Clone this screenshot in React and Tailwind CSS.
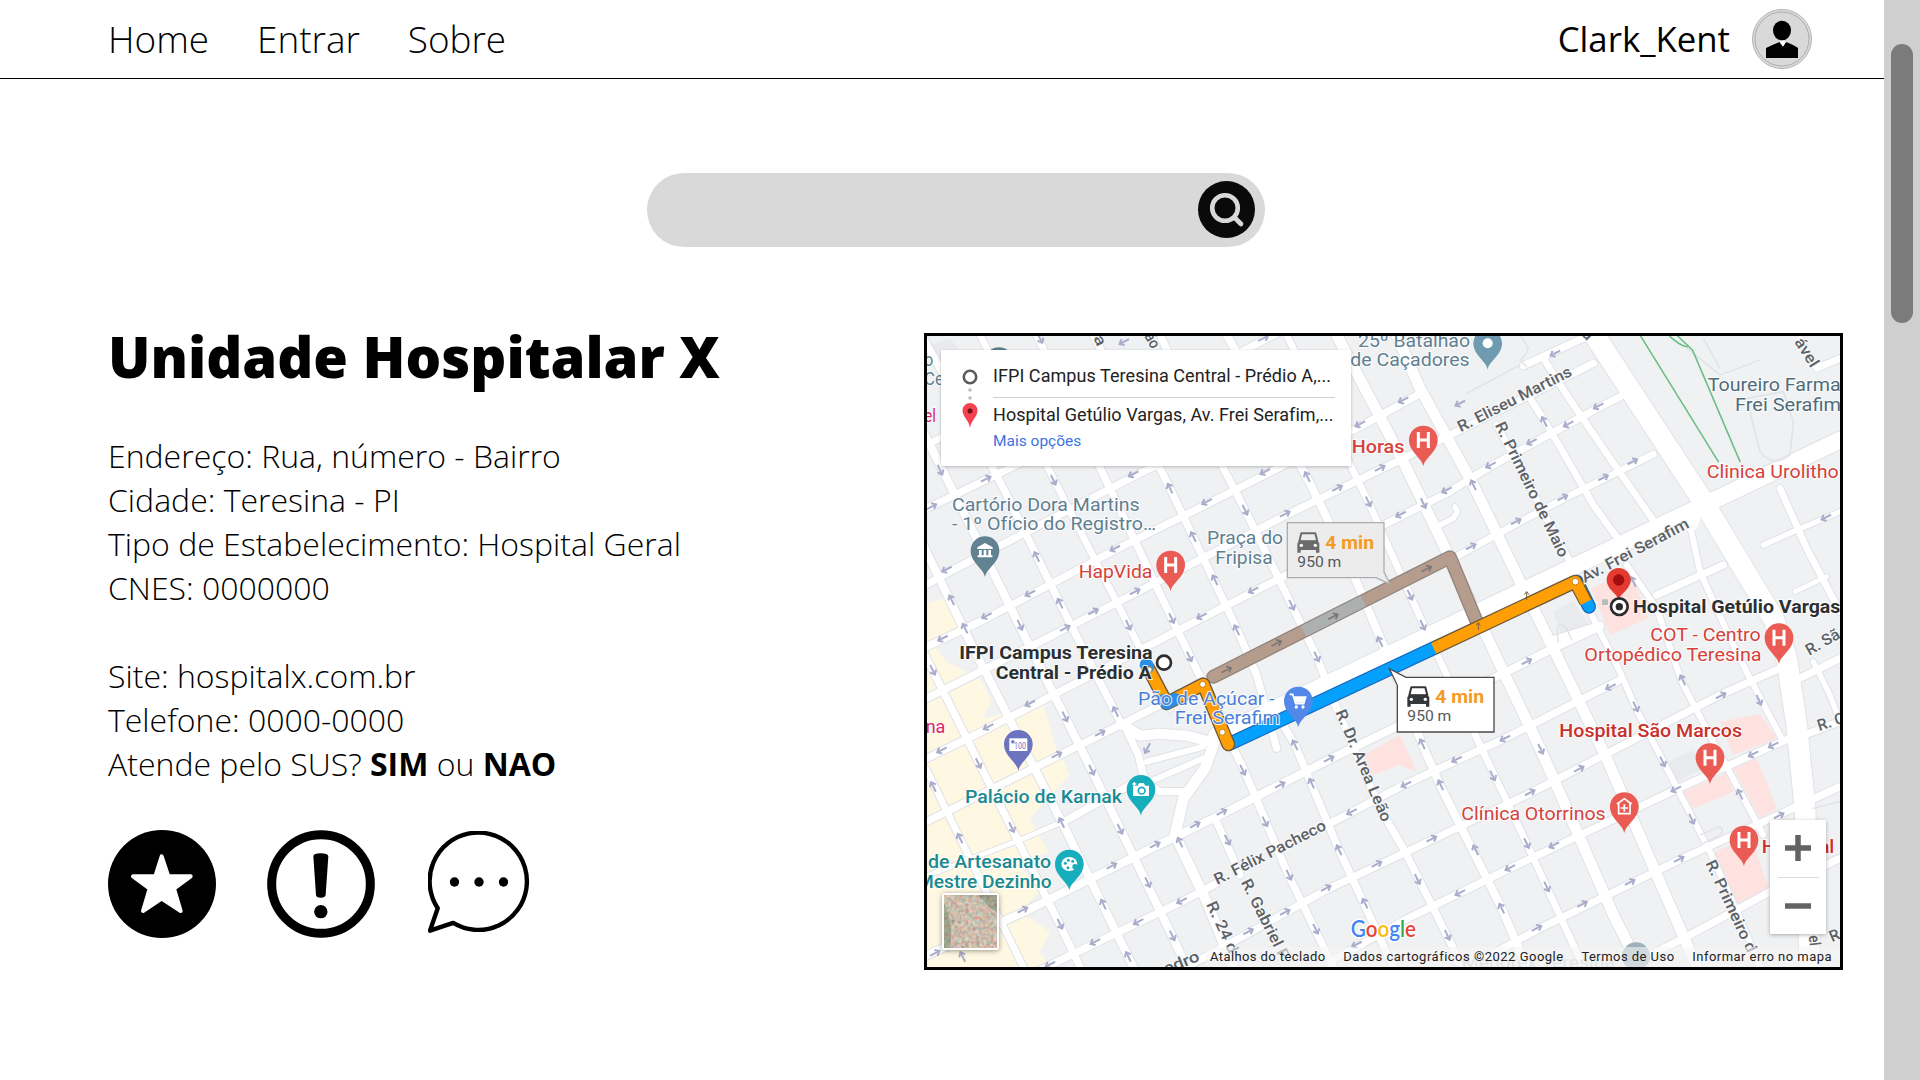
import React from "react";

/* Map drawing units: three per screen pixel. Each street is [width, points]. */
const streets = [
  [20, "0,370 60,340"],
  [22, "0,560 600,270 1080,20"],
  [22, "0,790 80,745 640,455 1290,130"],
  [22, "0,975 200,880 585,675 860,538 1320,305 1510,200"],
  [22, "0,1130 330,965 645,805 1095,572 1440,405 1580,335 2020,115"],
  [22, "0,1310 205,1210 845,880 1440,575 1580,505 1710,425 1835,357 2035,248 2100,215"],
  [22, "0,1500 410,1295 720,1140 900,1045"],
  [20, "1590,705 1788,597 1928,523 2050,463 2200,388"],
  [14, "0,1660 300,1545 440,1485"],
  [22, "440,1485 640,1375"],
  [24, "0,1900 310,1762 705,1565 905,1468 1225,1305 1440,1200 1770,1035 1910,965 2040,905"],
  [22, "330,1950 525,1855 785,1730 890,1675"],
  [22, "1180,1520 1295,1462 1455,1378 1755,1240 2100,1065"],
  [22, "800,1926 985,1825 1218,1695 1535,1545 1830,1405 2400,1110 2580,1030"],
  [22, "1230,1910 1460,1782 1770,1630 2265,1395 2500,1288 2620,1235"],
  [22, "1640,1930 1850,1815 2277,1605 2575,1470 2760,1385"],
  [22, "2150,1910 2300,1835 2550,1700 2760,1600"],
  [20, "20,1335 120,1540 310,1926"],
  [22, "0,960 175,1310 420,1800 480,1926"],
  [24, "0,640 135,920 425,1490 640,1926"],
  [24, "0,300 100,500 300,905 515,1335 755,1830 800,1926"],
  [22, "0,20 130,260 245,480 420,835 600,1190"],
  [20, "180,30 400,460 625,900 700,1050 750,1150"],
  [22, "350,30 560,470 755,880 850,1075"],
  [22, "940,1270 970,1330 1105,1650 1240,1926"],
  [22, "520,30 750,490 950,910 1010,1050 1070,1270"],
  [22, "1090,1200 1125,1260 1255,1570 1420,1926"],
  [22, "720,30 895,400 975,555 1115,840 1190,995 1250,1150 1380,1450 1455,1580 1600,1870 1620,1926"],
  [22, "885,1480 930,1580 960,1650"],
  [24, "920,30 1160,455 1280,700 1440,1080 1505,1255 1560,1380 1745,1750 1820,1926"],
  [20, "1100,30 1345,530 1470,810 1580,1050 1680,1260 1820,1555 1990,1926"],
  [32, "1250,30 1440,390 1600,720 1750,1040 1860,1270 1980,1540 2080,1770 2160,1926"],
  [32, "1430,30 1500,190 1660,480 1800,770 1900,970 2060,1300 2180,1580 2280,1810 2330,1926"],
  [20, "1820,205 1875,290 1940,400 2020,540 2100,650"],
  [20, "1730,300 1950,710"],
  [20, "1870,100 1940,210 2070,400 2210,600"],
  [62, "2010,10 2350,530 2560,880 2600,1000 2630,1200 2655,1450 2670,1926"],
  [18, "2000,840 2100,1040 2145,1145 2230,1310 2370,1580 2460,1780 2520,1926"],
  [18, "2120,720 2210,850 2285,1070 2340,1175 2460,1400 2530,1530"],
  [18, "2310,600 2340,740 2430,940 2490,1060 2590,1250"],
  [20, "2580,490 2660,670 2760,860"],
  [16, "2530,660 2620,620 2760,560"],
  [14, "2625,800 2720,755"],
  [22, "2210,810 2410,720"],
  [20, "1880,950 2040,900"],
  [16, "2680,1010 2730,1110 2760,1190"],
  [22, "2640,1060 2760,1000"],
  [22, "2640,1235 2760,1190"],
  [22, "1810,122 2010,30"],
  [16, "1560,600 1600,580 1612,560 1605,545"],
  [20, "2690,130 2760,100"],
  [16, "2690,130 2640,40"],
  [50, "890,1232 1050,1158 1540,925 1960,725 2310,560 2760,345"],
  [30, "610,1200 660,1232 720,1226 800,1232 870,1250"],
  [22, "615,1205 655,1290 675,1370 720,1400 790,1400"],
  [18, "680,1310 850,1265"],
  [18, "690,1370 850,1300"],
  [32, "880,1260 855,1330 790,1420 765,1530"],
  [30, "765,1530 860,1730 940,1926"],
];

const R = -27, L = 153, D = 64, U = 244;
/* One-way markers: x, y, heading in degrees. */
const arrows = [
  [60, 435, D], [198, 462, R], [35, 545, R], [400, 465, D], [640, 447, L], [750, 490, U], [975, 555, D],
  [860, 530, L], [1035, 440, L], [1162, 455, U], [1320, 297, L], [1380, 430, R], [1252, 490, R], [1095, 567, R],
  [1345, 530, D], [820, 635, U], [585, 670, L], [350, 695, U], [80, 733, L], [885, 765, U], [645, 800, R],
  [330, 805, L], [95, 825, U], [420, 835, U], [520, 860, R], [200, 872, L], [300, 900, D], [625, 900, D],
  [435, 910, R], [135, 910, U], [68, 940, L], [755, 880, D], [845, 873, L], [1000, 795, L], [1115, 840, D],
  [950, 915, U], [1380, 950, U], [360, 40, D], [612, 50, L], [1030, 40, R],
  [1450, 225, L], [1905, 85, L], [1620, 235, L], [2035, 243, L], [1945, 297, L], [1873, 290, U], [1835, 350, L],
  [1712, 420, L], [1580, 495, L], [1660, 480, U], [1510, 535, D], [1442, 568, L], [1788, 590, R], [1928, 518, R],
  [2050, 458, R], [2138, 410, R], [1653, 665, R], [1470, 810, D], [1508, 900, D], [2718, 577, L],
  [2140, 770, U], [38, 1035, D], [808, 995, D], [1190, 995, D], [330, 1135, L], [435, 1175, D],
  [587, 1160, U], [205, 1205, L], [540, 1225, R], [65, 1275, L], [410, 1290, R], [175, 1315, D], [515, 1335, D],
  [682, 1270, 118], [968, 1335, D], [1125, 1260, U], [1227, 1302, R], [1175, 1375, U], [1080, 1380, R], [40, 1385, U],
  [425, 1493, U], [275, 1507, D], [600, 1512, D], [825, 1500, R], [905, 1462, R], [1035, 1490, D], [1295, 1460, L],
  [120, 1540, U], [705, 1560, R], [780, 1552, U], [922, 1545, D], [1257, 1575, U], [575, 1623, R], [683, 1672, D],
  [1107, 1650, D], [1370, 1618, R], [1218, 1690, R], [785, 1727, L], [550, 1738, U], [308, 1755, R], [655, 1790, L],
  [420, 1797, D], [757, 1832, D], [985, 1820, R], [1095, 1762, R], [1187, 1812, D], [1335, 1735, U], [525, 1850, L],
  [625, 1895, U], [45, 1885, R], [128, 1895, U], [390, 1918, L], [1820, 1010, R], [2072, 1085, L], [2288, 1065, U],
  [2147, 1145, D], [2403, 1112, R], [2517, 1125, D], [1507, 1257, U], [1755, 1240, L], [1862, 1272, D],
  [1610, 1303, L], [1718, 1352, D], [1977, 1332, R], [2228, 1310, D], [2560, 1260, L], [2500, 1287, L], [1458, 1378, L],
  [1562, 1380, U], [1830, 1403, R], [2268, 1392, L], [2460, 1408, U], [2315, 1482, D], [2577, 1472, R],
  [1535, 1542, R], [1667, 1575, U], [1820, 1555, D], [1902, 1560, L], [1770, 1628, L], [2277, 1603, R],
  [1492, 1663, D], [1880, 1685, D], [2130, 1672, R], [1620, 1703, L], [1745, 1750, U], [1987, 1738, R],
  [1582, 1830, D], [1850, 1810, R], [1310, 1858, L],
];

const GREY = "#5f7f90", RED = "#d4423b", DARK = "#2c3033", TEAL = "#1b8a91", ROAD = "#5c6166";
/* Labels: text, x, baseline, drawn length, colour, weight. */
const labels = [
  ["25º Batalhão", 1315, 66, 336, GREY, 400],
  ["de Caçadores", 1292, 124, 358, GREY, 400],
  ["o", 14, 122, 27, GREY, 400],
  ["Ce", 14, 180, 58, GREY, 400],
  ["el", 14, 292, 35, "#d8246f", 400],
  ["na", 18, 1224, 59, "#d8246f", 400],
  ["Horas", 1296, 384, 158, RED, 500],
  ["Cartório Dora Martins", 97, 557, 563, GREY, 400],
  ["- 1º Ofício do Registro…", 97, 616, 612, GREY, 400],
  ["HapVida", 477, 760, 221, RED, 400],
  ["Praça do", 862, 658, 228, GREY, 400],
  ["Fripisa", 887, 717, 172, GREY, 400],
  ["Toureiro Farma", 2364, 199, 399, "#4f6c7a", 400],
  ["Frei Serafim", 2446, 258, 318, "#4f6c7a", 400],
  ["Clinica Urolitho", 2361, 460, 396, RED, 400],
  ["Hospital Getúlio Vargas", 2140, 864, 622, DARK, 700],
  ["COT - Centro", 2192, 949, 331, RED, 400],
  ["Ortopédico Teresina", 1994, 1008, 532, RED, 400],
  ["IFPI Campus Teresina", 119, 1003, 580, DARK, 700],
  ["Central - Prédio A", 228, 1063, 468, DARK, 700],
  ["Pão de Açúcar -", 655, 1139, 410, "#4a80d8", 400],
  ["Frei Serafim", 765, 1198, 316, "#4a80d8", 400],
  ["Palácio de Karnak", 136, 1434, 471, TEAL, 500],
  ["de Artesanato", 25, 1629, 369, TEAL, 500],
  ["Mestre Dezinho", -8, 1688, 404, TEAL, 500],
  ["Hospital São Marcos", 1919, 1236, 548, "#c9302b", 500],
  ["Clínica Otorrinos", 1625, 1484, 433, RED, 400],
  ["Hospital", 2526, 1585, 218, "#c9302b", 500],
];

/* Street names: text, x, y, length, angle. */
const roadNames = [
  ["R. Eliseu Martins", 1622, 322, 378, -27],
  ["R. Primeiro de Maio", 1724, 300, 445, 64],
  ["Av. Frei Serafim", 1994, 774, 358, -28],
  ["R. Dr. Area Leão", 1246, 1162, 360, 67],
  ["R. Félix Pacheco", 892, 1680, 370, -27],
  ["R. Gabriel F", 962, 1672, 262, 63],
  ["R. 24 d", 858, 1738, 165, 65],
  ["R. Primeiro d", 2356, 1614, 300, 65],
  ["edro", 738, 1948, 112, -22],
  ["R. Sã", 2668, 992, 110, -30],
  ["R. C", 2698, 1218, 84, -18],
  ["R", 2736, 1852, 30, -24],
  ["el", 2666, 1832, 32, 84],
  ["ável", 2622, 50, 95, 58],
  ["ira", 506, 8, 64, 66],
  ["ão", 672, 32, 48, 62],
  ["a", 1984, 30, 26, 45],
];

function Pin({ x, y, color, children }) {
  return (
    <g transform={`translate(${x} ${y})`}>
      <path d="M0 79 C-5 52 -43 36 -43 0 A43 43 0 1 1 43 0 C43 36 5 52 0 79Z" fill={color} />
      {children}
    </g>
  );
}

function HospitalPin({ x, y }) {
  return (
    <Pin x={x} y={y} color="#ea5b54">
      <path d="M-15 -24V24M15 -24V24M-15 0H15" stroke="#fff" strokeWidth="9" fill="none" />
    </Pin>
  );
}

function Callout({ x, y, muted }) {
  const ink = muted ? "#6b6b6b" : "#34363a";
  return (
    <g transform={`translate(${x} ${y})`}>
      {muted ? (
        <path d="M0 0H290V148L308 184L266 165H0Z" fill="#ececec" stroke="#adadad" strokeWidth="4" />
      ) : (
        <path d="M26 -14H290V150H0V10L-24 -40L26 -14Z" transform="translate(0 16)" fill="#fff" stroke="#4b4b4b" strokeWidth="4" />
      )}
      <g transform="translate(30 30)">
        <path d="M12 2H54L60 26H6Z" fill="none" stroke={ink} strokeWidth="6" strokeLinejoin="round" />
        <path d="M6 24H60L66 32V60H56V52H10V60H0V32Z" fill={ink} />
        <circle cx="12" cy="38" r="5" fill="#fff" />
        <circle cx="54" cy="38" r="5" fill="#fff" />
      </g>
      <text x="114" y="78" textLength="146" lengthAdjust="spacingAndGlyphs" fontSize="54" fontWeight="700" fill="#f59a23">4 min</text>
      <text x="30" y="132" textLength="132" lengthAdjust="spacingAndGlyphs" fontSize="45" fill="#55585c">950 m</text>
    </g>
  );
}

function CityMap() {
  return (
    <svg viewBox="21 33 2739 1893" preserveAspectRatio="none" className="block h-full w-full font-['Roboto',sans-serif]">
      <rect x="0" y="0" width="2800" height="1960" fill="#eff1f3" />
      <g fill="#fef7e1">
        <path d="M0 840L90 815L125 925L40 960L80 1010L180 1060L215 1130L190 1180L370 1140L405 1260L450 1350L365 1440L330 1480L385 1580L300 1620L360 1700L300 1760L390 1820L360 1880L390 1926H0Z" />
      </g>
      <g fill="#fde2e0">
        <path d="M2015 790L2130 735L2185 880L2070 930Z" />
        <path d="M1330 1290L1440 1230L1490 1340L1440 1320L1350 1352Z" />
        <path d="M2400 1190L2520 1168L2570 1240L2440 1290Z" />
        <path d="M2290 1400L2420 1345L2440 1400L2320 1450Z" />
        <path d="M2440 1330L2510 1300L2570 1450L2520 1480Z" />
        <path d="M2370 1590L2490 1530L2550 1700L2450 1735Z" />
      </g>
      <g fill="#e8eaee">
        <path d="M1900 860L1960 830L2020 920L1930 950Z" />
        <path d="M2245 1310L2320 1275L2350 1330L2270 1370Z" />
        <path d="M30 60L90 40L120 80L50 130Z" />
      </g>
      <g fill="none" strokeLinejoin="round" strokeLinecap="round">
        <g stroke="#e0e2e8">
          {streets.map(([w, pts], i) => <polyline key={i} points={pts} strokeWidth={w + 6} />)}
        </g>
        <g stroke="#ffffff">
          {streets.map(([w, pts], i) => <polyline key={i} points={pts} strokeWidth={w} />)}
        </g>
        <path d="M2330 560L2312 600" stroke="#fff" strokeWidth="40" />
        <g stroke="#dfe1e6" strokeWidth="4">
          <path d="M2290 60L2400 150L2520 105M2400 130L2350 40M2480 220L2590 200L2620 290L2610 390Q2560 430 2520 380Z" />
          <path d="M1800 30L1825 70Q1820 90 1800 105L1820 125M1640 205L1800 120" />
          <path d="M2340 1530L2400 1505Q2415 1515 2400 1530L2350 1555" />
          <path d="M1915 950L1910 910Q1925 890 1940 910L1955 945M2680 1450L2760 1430" />
        </g>
        <path d="M2160 30L2395 410M2250 35Q2290 70 2306 64M2270 30L2318 76L2460 410" stroke="#69bd80" strokeWidth="4.5" />
      </g>

      <g fill="none" strokeLinejoin="round" strokeLinecap="round">
        <path d="M880 1055L1590 697L1670 890" stroke="#91857d" strokeWidth="42" />
        <path d="M880 1055L1590 697L1670 890" stroke="#b69c8c" strokeWidth="34" />
        <path d="M1150 919L1330 828" stroke="#adb0b0" strokeWidth="35" strokeLinecap="butt" />
        <path d="M930 1256L1545 968" stroke="#1869c4" strokeWidth="42" />
        <path d="M1970 770L2007 845" stroke="#1869c4" strokeWidth="42" />
        <path d="M930 1256L1545 968M1970 770L2007 845" stroke="#05a0fb" strokeWidth="34" />
        <path d="M685 1030L740 1135L850 1078L925 1258" stroke="#6b5a38" strokeWidth="42" />
        <path d="M685 1030L740 1135L850 1078L925 1258" stroke="#ff9f05" strokeWidth="34" />
        <path d="M950 1247L1545 968" stroke="#05a0fb" strokeWidth="34" strokeLinecap="butt" />
        <path d="M730 1125L740 1135L765 1122" stroke="#2b8fe8" strokeWidth="36" />
        <path d="M679 1019L683 1026" stroke="#2b8fe8" strokeWidth="40" />
        <path d="M1545 968L1966 770L1998 830" stroke="#6b5a38" strokeWidth="42" strokeLinecap="butt" />
        <path d="M1541 970L1966 770L1998 832" stroke="#ff9f05" strokeWidth="34" strokeLinecap="butt" />
      </g>

      <g stroke="#a9acca" strokeWidth="6" fill="none">
        {arrows.map(([x, y, a], i) => (
          <g key={i} transform={`translate(${x} ${y}) rotate(${a})`}>
            <path d="M-17 0H14" />
            <path d="M3 -10L15 0L3 10" />
          </g>
        ))}
      </g>
      <g stroke="#7d7574" strokeWidth="5" fill="none">
        {[[920, 1035], [1070, 955], [1240, 875], [1520, 732]].map(([x, y]) => (
          <path key={x} transform={`translate(${x} ${y}) rotate(-27)`} d="M-17 0H14M3 -10L15 0L3 10" />
        ))}
        <path d="M1675 915V893M1669 901L1675 893L1681 901M1820 825V800M1813 809L1820 800L1827 809" stroke="#7a6434" strokeWidth="3" />
      </g>
      <g fill="#fff" stroke="#c77f12" strokeWidth="3">
        <circle cx="688" cy="1034" r="8" />
        <circle cx="848" cy="1078" r="9" />
        <circle cx="907" cy="1222" r="9" />
        <circle cx="1966" cy="770" r="10" />
      </g>

      <g fill={ROAD} stroke="#f7f8f9" strokeWidth="7" paintOrder="stroke" fontSize="47" fontWeight="500">
        {roadNames.map(([t, x, y, len, a], i) => (
          <text key={i} transform={`translate(${x} ${y}) rotate(${a})`} textLength={len} lengthAdjust="spacingAndGlyphs">{t}</text>
        ))}
      </g>

      <Pin x={195} y={677} color="#628291">
        <path d="M-23 -10L0 -23L23 -10V-5H-23ZM-18 -2H-10V14H-18ZM-4 -2H4V14H-4ZM10 -2H18V14H10ZM-22 14H22V20H-22Z" fill="#fff" />
      </Pin>
      <Pin x={237} y={110} color={GREY} />
      <Pin x={1703} y={55} color="#6f9bb1"><circle r="15" fill="#fff" /></Pin>
      <HospitalPin x={752} y={720} />
      <HospitalPin x={1510} y={345} />
      <HospitalPin x={2577} y={938} />
      <HospitalPin x={2370} y={1298} />
      <HospitalPin x={2472} y={1545} />
      <Pin x={2113} y={1445} color="#ea5b54">
        <path d="M-22 -8L0 -24L22 -8M-17 -10V21H17V-10" fill="none" stroke="#fff" strokeWidth="5" />
        <path d="M0 -7V15M-11 4H11" stroke="#fff" strokeWidth="5" />
      </Pin>
      <Pin x={295} y={1258} color="#6c74c0">
        <rect x="-27" y="-18" width="54" height="38" fill="#fff" />
        <rect x="-21" y="-12" width="9" height="9" fill="#6c74c0" />
        <text x="-13" y="15" textLength="36" lengthAdjust="spacingAndGlyphs" fontSize="26" fill="#6c74c0">100</text>
      </Pin>
      <Pin x={663} y={1393} color="#16adbc">
        <path d="M-24 -11H-10L-5 -19H8L13 -11H24V20H-24Z" fill="#fff" />
        <circle cx="2" cy="4" r="10" fill="none" stroke="#16adbc" strokeWidth="5" />
        <path d="M-26 -16H-14M-20 -22V-10" stroke="#fff" strokeWidth="4" />
      </Pin>
      <Pin x={448} y={1617} color="#16adbc">
        <ellipse rx="24" ry="21" fill="#fff" />
        <g fill="#16adbc"><circle cx="-12" cy="-2" r="4.5" /><circle cx="-3" cy="-11" r="4.5" /><circle cx="10" cy="-8" r="4.5" /><circle cx="-4" cy="11" r="4.5" /><circle cx="17" cy="8" r="8" /></g>
      </Pin>
      <Pin x={1135} y={1128} color="#5289e8">
        <path d="M-26 -20H-17L-8 8H16L22 -12H-13" fill="none" stroke="#fff" strokeWidth="5" />
        <path d="M-13 -12H22L16 5H-8Z" fill="#fff" />
        <circle cx="-6" cy="18" r="5" fill="#fff" /><circle cx="14" cy="18" r="5" fill="#fff" />
      </Pin>
      <circle cx="2148" cy="1894" r="42" fill="#9db0bb" />
      <text x="1625" y="1930" textLength="460" lengthAdjust="spacingAndGlyphs" fontSize="50" fill="#c4ccd2">Menorex Teresina</text>

      <g transform="translate(2096 765)">
        <path d="M0 60C-5 40 -36 28 -36 0A36 36 0 1 1 36 0C36 28 5 40 0 60Z" fill="#e43b30" />
        <circle r="17" fill="#a50e0e" />
      </g>
      <circle cx="2098" cy="845" r="25" fill="#fff" stroke="#2c2c2c" strokeWidth="8" />
      <circle cx="2098" cy="845" r="11" fill="#2c2c2c" />
      <rect x="2046" y="823" width="18" height="17" fill="#b7bcbc" />

      <g transform="translate(-1 0)" fontSize="56" stroke="#ffffff" strokeWidth="6" strokeOpacity="0.85" paintOrder="stroke">
        {labels.map(([t, x, y, len, color, weight], i) => (
          <text key={i} x={x} y={y} textLength={len} lengthAdjust="spacingAndGlyphs" fill={color} fontWeight={weight}>{t}</text>
        ))}
      </g>
      <circle cx="732" cy="1013" r="21" fill="#fff" stroke="#2c2c2c" strokeWidth="8" />

      <Callout x={1102} y={593} muted />
      <Callout x={1432} y={1055} />

      <text x="1292" y="1837" fontSize="66" textLength="196" lengthAdjust="spacingAndGlyphs" stroke="#fff" strokeWidth="8" paintOrder="stroke" className="font-['Lato',sans-serif]" fontWeight="600">
        <tspan fill="#4285f4">G</tspan><tspan fill="#ea4335">o</tspan><tspan fill="#fbbc05">o</tspan><tspan fill="#4285f4">g</tspan><tspan fill="#34a853">l</tspan><tspan fill="#ea4335">e</tspan>
      </text>
    </svg>
  );
}

function RouteCard() {
  return (
    <div className="absolute left-[14px] top-[14px] flex h-[116px] w-[410px] gap-[15px] bg-white pl-[21px] pt-[16px] font-['Roboto',sans-serif] shadow-[0_1px_3px_rgba(0,0,0,0.25)]">
      <svg viewBox="0 0 16 62" className="mt-[2px] h-[62px] w-4 shrink-0">
        <circle cx="8" cy="9" r="6.2" fill="#fff" stroke="#5b5b5b" strokeWidth="2.6" />
        <circle cx="8" cy="22" r="1.8" fill="#bdbdbd" />
        <circle cx="8" cy="30" r="1.8" fill="#bdbdbd" />
        <path d="M8 60C7 52 .5 49 .5 42.500A7.500 7.500 0 0 1 15.500 42.500C15.500 49 9 52 8 60Z" fill="#f4434e" />
        <circle cx="8" cy="43" r="2.500" fill="#6d1118" />
      </svg>
      <div className="w-[342px]">
        <p className="h-[32px] whitespace-nowrap border-b border-[#cfcfcf] pt-px text-[18px] leading-[18px] tracking-[0.06px] text-[#222]">IFPI Campus Teresina Central - Prédio A,...</p>
        <p className="mt-[7px] whitespace-nowrap text-[18px] leading-[20px] tracking-[0.04px] text-[#222]">Hospital Getúlio Vargas, Av. Frei Serafim,...</p>
        <p className="mt-[7px] text-[15.500px] leading-[18px] text-[#3b73e0]">Mais opções</p>
      </div>
    </div>
  );
}

function SatelliteThumb() {
  return (
    <div className="absolute bottom-[17px] left-[15px] h-[57px] w-[57px] rounded-[3px] border-2 border-white shadow-[0_1px_5px_rgba(0,0,0,0.4)]">
      <svg viewBox="0 0 53 53" className="block h-full w-full">
        <filter id="terrain" x="0" y="0" width="100%" height="100%">
          <feTurbulence type="fractalNoise" baseFrequency="0.28" numOctaves="3" seed="8" />
          <feColorMatrix values="0.8 0 0 0 0.2  0 0.65 0.1 0 0.13  0 0.4 0.35 0 0.04  0 0 0 0 1" />
        </filter>
        <rect width="53" height="53" filter="url(#terrain)" />
        <path d="M0 8Q10 26 6 53H0ZM34 0L53 0V18Q44 12 34 0Z" fill="#4d6b4a" opacity="0.35" />
      </svg>
    </div>
  );
}

function MapPanel() {
  return (
    <section className="relative h-[637px] w-[919px] overflow-hidden border-[3px] border-black bg-[#eff1f3]">
      <CityMap />
      <RouteCard />
      <div className="absolute bottom-[33px] right-[14px] flex h-[114px] w-14 flex-col items-center bg-white shadow-[0_1px_4px_rgba(0,0,0,0.3)]">
        <div className="flex flex-1 items-center"><svg viewBox="0 0 26 26" className="h-[26px] w-[26px]"><path d="M13 0V26M0 13H26" stroke="#636363" strokeWidth="5.500" /></svg></div>
        <div className="h-px w-[41px] bg-[#dcdcdc]" />
        <div className="flex flex-1 items-center"><svg viewBox="0 0 26 26" className="h-[26px] w-[26px]"><path d="M0 13H26" stroke="#636363" strokeWidth="5.500" /></svg></div>
      </div>
      <SatelliteThumb />
      <div className="absolute bottom-0 right-0 flex h-[20px] w-[635px] items-center justify-between whitespace-nowrap bg-[#f5f5f5]/60 pl-[5px] pr-[8px] font-['Roboto',sans-serif] text-[13px] text-[#222]">
        <span className="tracking-[0.4px]">Atalhos do teclado</span>
        <span className="tracking-[0.5px]">Dados cartográficos ©2022 Google</span>
        <span className="tracking-[0.46px]">Termos de Uso</span>
        <span className="tracking-[0.46px]">Informar erro no mapa</span>
      </div>
    </section>
  );
}

function Header() {
  return (
    <header className="flex h-[79px] items-center justify-between border-b border-black pl-[108px] pr-[72px]">
      <nav className="flex gap-[48px] pt-[2px] text-[36.900px] font-light">
        <a>Home</a>
        <a>Entrar</a>
        <a>Sobre</a>
      </nav>
      <div className="flex items-center gap-[22px]">
        <span className="text-[34.800px]">Clark_Kent</span>
        <svg viewBox="0 0 60 60" className="h-[60px] w-[60px]">
          <circle cx="30" cy="30" r="29.500" fill="#d9d9d9" stroke="#b5b5b5" />
          <circle cx="30" cy="30" r="27" fill="#d9d9d9" stroke="#adadad" />
          <ellipse cx="30" cy="21.500" rx="9" ry="9.800" fill="#000" />
          <path d="M14 49V39Q20 36 27.500 33L31 37.500L34 33Q42 36 46 39V49Z" fill="#000" />
          <path d="M27.500 33L31 37.500L34 33L31 31.500Z" fill="#fff" />
        </svg>
      </div>
    </header>
  );
}

function Actions() {
  return (
    <div className="flex">
      <svg viewBox="0 0 324 324" className="h-[108px] w-[108px]">
        <circle cx="162" cy="162" r="162" />
        <path d="M161 79L181 139L248 139L198 176L218 243L161 206L105 243L125 176L75 139L142 139Z" fill="#fff" stroke="#fff" strokeWidth="12" strokeLinejoin="round" />
      </svg>
      <svg viewBox="0 0 324 324" className="ml-[51px] h-[108px] w-[108px]">
        <circle cx="162" cy="162" r="148" fill="none" stroke="#000" strokeWidth="27" />
        <path d="M139 79Q139 70 161 70T184 79L176 194Q175 203 161 203T147 194Z" />
        <circle cx="161.500" cy="245" r="20" />
      </svg>
      <svg viewBox="0 0 304 304" className="ml-[53px] mt-[1px] h-[102px] w-[102px]">
        <path d="M29 230A145 145 0 1 1 75 274L6 297Z" fill="none" stroke="#000" strokeWidth="13" strokeLinejoin="round" />
        <circle cx="79" cy="152" r="14" />
        <circle cx="152" cy="152" r="14" />
        <circle cx="225" cy="152" r="14" />
      </svg>
    </div>
  );
}

export default function App() {
  return (
    <div className="flex h-[1080px] w-[1920px] overflow-hidden bg-white font-['Open_Sans',sans-serif] text-black">
      <div className="w-[1884px]">
        <Header />
        <div className="ml-[647px] mt-[94px] flex h-[74px] w-[618px] items-start justify-end rounded-full bg-[#d9d9d9] pr-[10px] pt-[8px]">
          <svg viewBox="0 0 57 57" className="h-[57px] w-[57px]">
            <circle cx="28.500" cy="28.500" r="28.500" fill="#0a0a0a" />
            <circle cx="27" cy="27" r="12.800" fill="none" stroke="#d9d9d9" strokeWidth="4.600" />
            <path d="M36.500 36.500L43 43" stroke="#d9d9d9" strokeWidth="4.600" strokeLinecap="round" />
          </svg>
        </div>
        <main className="flex pl-[108px] pt-[86px]">
          <div className="w-[816px]">
            <h1 className="-mt-[4px] text-[56.100px] font-extrabold leading-[54px]">Unidade Hospitalar X</h1>
            <div className="mt-[51px] text-[32px] font-light leading-[44px]">
              <p>Endereço: Rua, número - Bairro</p>
              <p>Cidade: Teresina - PI</p>
              <p>Tipo de Estabelecimento: Hospital Geral</p>
              <p>CNES: 0000000</p>
              <p className="mt-[44px]">Site: hospitalx.com.br</p>
              <p>Telefone: 0000-0000</p>
              <p>Atende pelo SUS? <b className="font-bold">SIM</b> ou <b className="font-bold">NAO</b></p>
            </div>
            <div className="mt-[44px]"><Actions /></div>
          </div>
          <MapPanel />
        </main>
      </div>
      <div className="w-9 bg-[#cfcfcf] pl-[7px] pt-11">
        <div className="h-[279px] w-[22px] rounded-full bg-[#7b7b7b]" />
      </div>
    </div>
  );
}
